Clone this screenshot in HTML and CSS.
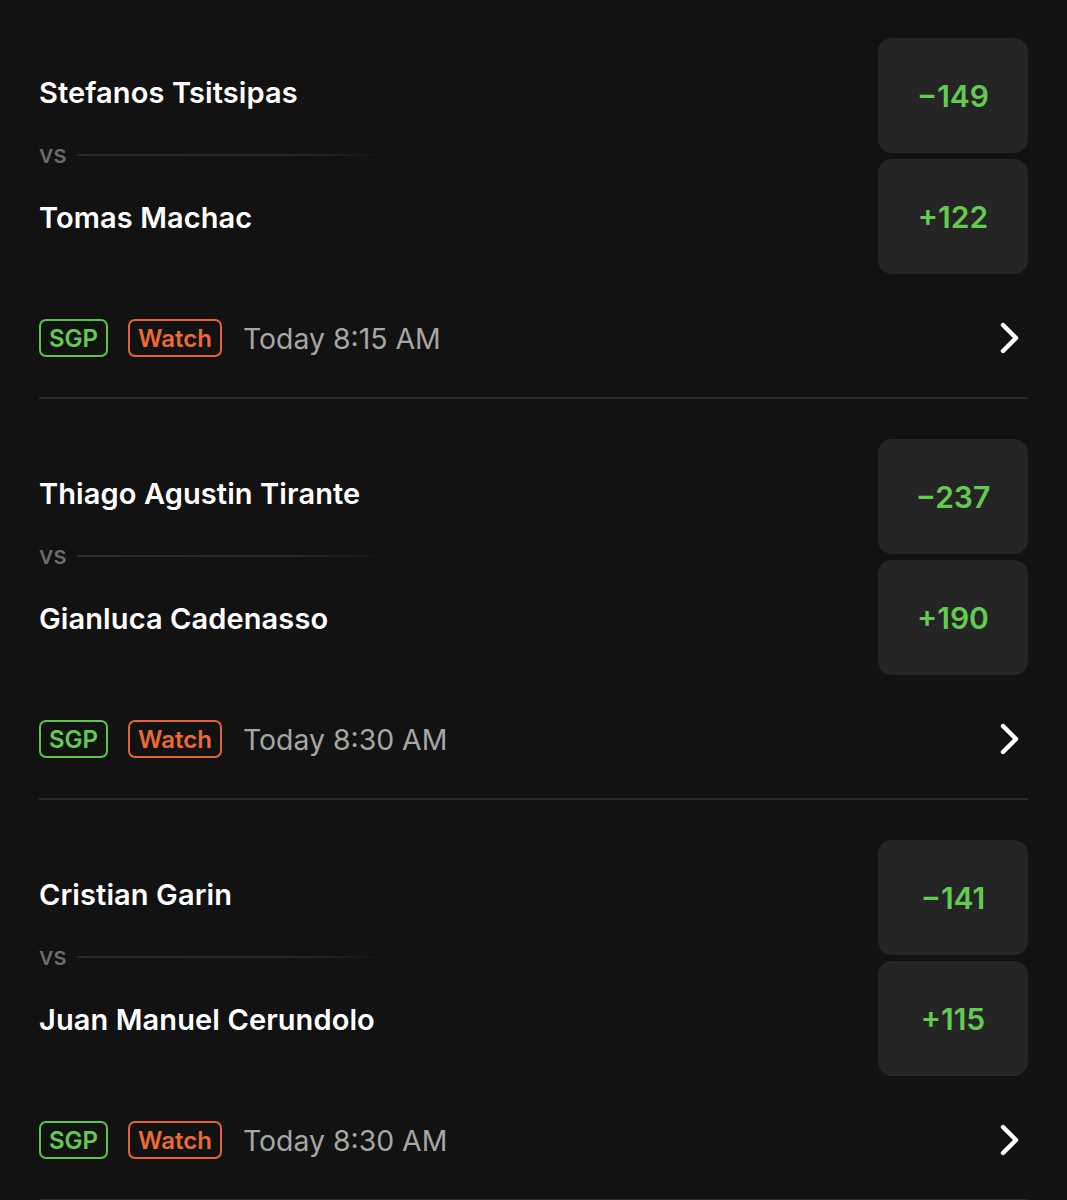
FILE: index.html
```html
<!DOCTYPE html>
<html lang="en">
  <head>
    <meta charset="UTF-8" />
    <title>Tennis Matches</title>
    <link rel="stylesheet" href="styles.css">
  </head>
  <body>
    <div class="match-list">
      <!-- Match 1 -->
      <div class="match">
        <div class="match-top">
          <div class="players">
            <div class="player">Stefanos Tsitsipas</div>
            <div class="vs-row"><span class="vs">vs</span><span class="vs-line"></span></div>
            <div class="player player-two">Tomas Machac</div>
          </div>
          <div class="odds">
            <div class="odd">&minus;149</div>
            <div class="odd">+122</div>
          </div>
        </div>
        <div class="match-footer">
          <span class="badge badge-sgp">SGP</span>
          <span class="badge badge-watch">Watch</span>
          <span class="match-time">Today 8:15 AM</span>
          <svg class="chevron" width="20" height="32" viewBox="0 0 20 32">
            <path d="M3 3 L16 16 L3 29" fill="none" stroke="#fff" stroke-width="4.4" stroke-linecap="round" stroke-linejoin="round" />
          </svg>
        </div>
      </div>

      <!-- Match 2 -->
      <div class="match">
        <div class="match-top">
          <div class="players">
            <div class="player">Thiago Agustin Tirante</div>
            <div class="vs-row"><span class="vs">vs</span><span class="vs-line"></span></div>
            <div class="player player-two">Gianluca Cadenasso</div>
          </div>
          <div class="odds">
            <div class="odd">&minus;237</div>
            <div class="odd">+190</div>
          </div>
        </div>
        <div class="match-footer">
          <span class="badge badge-sgp">SGP</span>
          <span class="badge badge-watch">Watch</span>
          <span class="match-time">Today 8:30 AM</span>
          <svg class="chevron" width="20" height="32" viewBox="0 0 20 32">
            <path d="M3 3 L16 16 L3 29" fill="none" stroke="#fff" stroke-width="4.4" stroke-linecap="round" stroke-linejoin="round" />
          </svg>
        </div>
      </div>

      <!-- Match 3 -->
      <div class="match">
        <div class="match-top">
          <div class="players">
            <div class="player">Cristian Garin</div>
            <div class="vs-row"><span class="vs">vs</span><span class="vs-line"></span></div>
            <div class="player player-two">Juan Manuel Cerundolo</div>
          </div>
          <div class="odds">
            <div class="odd">&minus;141</div>
            <div class="odd">+115</div>
          </div>
        </div>
        <div class="match-footer">
          <span class="badge badge-sgp">SGP</span>
          <span class="badge badge-watch">Watch</span>
          <span class="match-time">Today 8:30 AM</span>
          <svg class="chevron" width="20" height="32" viewBox="0 0 20 32">
            <path d="M3 3 L16 16 L3 29" fill="none" stroke="#fff" stroke-width="4.4" stroke-linecap="round" stroke-linejoin="round" />
          </svg>
        </div>
      </div>
    </div>
  </body>
</html>
```

FILE: styles.css
```css
html {
  height: 100%;
}
body {
  margin: 0;
  padding: 0 39px;
  background: #121212;
  font-family: Inter, "Noto Sans", sans-serif;
  color: #fff;
}

/* One match block */
.match {
  padding-top: 38px;
  padding-bottom: 40px;
  border-bottom: 2px solid #2a2a2a;
}

.match + .match {
  padding-top: 40px;
}

.match-top {
  display: flex;
  justify-content: space-between;
}

/* Player names */
.players {
  display: flex;
  flex-direction: column;
  padding-top: 37px;
}

.player {
  font-size: 29px;
  font-weight: 600;
  line-height: 36px;
  letter-spacing: 0.1px;
}

.player-two {
  margin-top: 31px;
}

.vs-row {
  display: flex;
  align-items: center;
  height: 30px;
  margin-top: 28px;
}

.vs {
  font-size: 25px;
  font-weight: 500;
  color: #6c6c6c;
  line-height: 30px;
}

.vs-line {
  width: 310px;
  height: 2px;
  margin-left: 10px;
  margin-top: 2px;
  background: linear-gradient(to right, #2b2b2b 0%, #262626 70%, rgba(38, 38, 38, 0) 100%);
}

/* Odds buttons */
.odds {
  display: flex;
  flex-direction: column;
  gap: 6px;
}

.odd {
  width: 150px;
  height: 115px;
  display: flex;
  align-items: center;
  justify-content: center;
  background: #252525;
  border-radius: 14px;
  color: #63cb4f;
  font-size: 30px;
  font-weight: 600;
}

/* Footer row */
.match-footer {
  display: flex;
  align-items: center;
  margin-top: 45px;
  height: 38px;
}

.badge {
  box-sizing: border-box;
  height: 38px;
  display: inline-flex;
  align-items: center;
  padding: 0 8px;
  border: 2px solid;
  border-radius: 7px;
  font-size: 24px;
  font-weight: 600;
}

.badge-sgp {
  color: #63cb4f;
  border-color: #5cc44a;
}

.badge-watch {
  margin-left: 20px;
  color: #ec6a36;
  border-color: #e5652f;
}

.match-time {
  margin-left: 21px;
  font-size: 28.4px;
  color: #a6a6a6;
}

.chevron {
  margin-left: auto;
  margin-right: 8px;
}
```
